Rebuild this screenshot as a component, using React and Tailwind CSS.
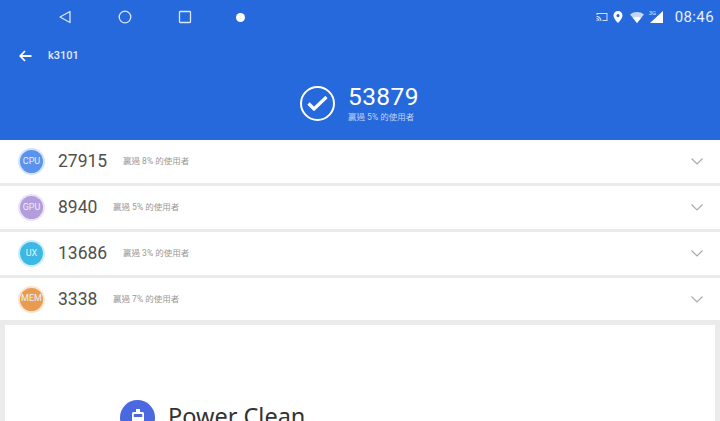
import React from "react";

const rows = [
  { label: "CPU", score: "27915", pct: "8%", bg: "bg-[#5b93ec]", ring: "border-[#d3e3fb]", scoreW: "w-[65px]", h: "h-[43px]" },
  { label: "GPU", score: "8940", pct: "5%", bg: "bg-[#b39ddb]", ring: "border-[#e9e2f6]", scoreW: "w-[55px]", h: "h-[43px]" },
  { label: "UX", score: "13686", pct: "3%", bg: "bg-[#3db8e4]", ring: "border-[#c9edf9]", scoreW: "w-[65px]", h: "h-[43px]" },
  { label: "MEM", score: "3338", pct: "7%", bg: "bg-[#e89c51]", ring: "border-[#fae3cd]", scoreW: "w-[55px]", h: "h-[42px]" },
];

function StatusBar() {
  return (
    <div className="flex h-[34px] items-center text-white">
      <div className="flex items-center pl-[58px]">
        <svg width="14" height="14" viewBox="0 0 14 14" fill="none" stroke="#dbe7fb" strokeWidth="1.3">
          <path d="M12 1.5V12.5L2 7Z" strokeLinejoin="round" />
        </svg>
        <svg className="ml-[46px]" width="14" height="14" viewBox="0 0 14 14" fill="none" stroke="#dbe7fb" strokeWidth="1.3">
          <circle cx="7" cy="7" r="5.8" />
        </svg>
        <svg className="ml-[46px]" width="14" height="14" viewBox="0 0 14 14" fill="none" stroke="#dbe7fb" strokeWidth="1.3">
          <rect x="1.5" y="1.5" width="11" height="11" rx="0.8" />
        </svg>
        <div className="ml-[44px] h-[9px] w-[9px] rounded-full bg-white" />
      </div>
      <div className="ml-auto flex items-center pr-[6px]">
        <svg width="12" height="10" viewBox="0 0 11 10" fill="#cfdff9">
          <path d="M0 1h11v8H6V8h4V2H1v1H0zM0 4c3 0 5 2 5 5H4c0-2-2-4-4-4zm0 2c2 0 3 1 3 3H2c0-1-1-2-2-2zm0 2h1v1H0z" />
        </svg>
        <svg className="ml-[5px]" width="10" height="12" viewBox="0 0 10 12" fill="#fff">
          <path fillRule="evenodd" d="M5 0a4.5 4.5 0 0 1 4.5 4.5C9.500 7.500 5 12 5 12S.5 7.500.5 4.500A4.500 4.500 0 0 1 5 0zm0 3a1.600 1.600 0 1 0 0 3.200A1.600 1.600 0 0 0 5 3z" />
        </svg>
        <svg className="ml-[7px]" width="14" height="11" viewBox="0 0 14 11">
          <path d="M0 2.500C4-.8 10-.8 14 2.500L7 11Z" fill="#c3d7f7" />
          <path d="M3 6C5 4.500 9 4.500 11 6L7 11Z" fill="#fff" />
        </svg>
        <div className="relative ml-[5px] h-[14px] w-[15px]">
          <span className="absolute left-0 top-[-1px] font-['Roboto',sans-serif] text-[6px] leading-[7px] text-[#dbe7fb]">3G</span>
          <svg className="absolute left-0 top-0" width="15" height="14" viewBox="0 0 15 14" fill="#fff">
            <path d="M14 1V13H1Z" />
          </svg>
        </div>
        <span className="ml-[11px] font-['Roboto',sans-serif] text-[15px] tracking-[0.4px] text-[#e6effd]">08:46</span>
      </div>
    </div>
  );
}

export default function App() {
  return (
    <div className="h-[421px] w-[720px] overflow-hidden bg-[#ebebeb] font-['Roboto','Noto_Sans_CJK_TC',sans-serif]">
      <div className="h-[140px] bg-[#2669dd]">
        <StatusBar />
        <div className="flex h-[44px] items-center pl-[19px]">
          <svg width="13" height="12" viewBox="0 0 13 12" fill="none" stroke="#fff" strokeWidth="1.800">
            <path d="M12.500 6H1.500M6 1 1.200 6 6 11" />
          </svg>
          <span className="ml-[16px] text-[11px] font-medium text-[#e3edfc]">k3101</span>
        </div>
        <div className="mt-[5px] flex items-center justify-center">
          <div className="flex h-[35px] w-[35px] items-center justify-center rounded-full border-2 border-white">
            <svg width="21" height="16" viewBox="0 0 21 16" fill="none" stroke="#fff" strokeWidth="3.200">
              <path d="M1.500 8.500 7 14 19.500 2" />
            </svg>
          </div>
          <div className="ml-[13px] flex w-[72px] flex-col">
            <span className="text-[24.500px] leading-[28px] tracking-[0.4px] text-white">53879</span>
            <span className="whitespace-nowrap text-[8.500px] leading-[12px] text-[#bcd3f6]">贏過 5% 的使用者</span>
          </div>
        </div>
      </div>
      {rows.map((row) => (
        <div key={row.label} className={`mb-[3px] flex items-center bg-white pl-[18px] pr-[17px] ${row.h}`}>
          <div className={`flex h-[27px] w-[27px] items-center justify-center rounded-full border-2 ${row.bg} ${row.ring}`}>
            <span className="text-[9px] text-[#e8f0fc]">{row.label}</span>
          </div>
          <span className={`ml-[13px] ${row.scoreW} text-[17.500px] text-[#4f4f4f]`}>{row.score}</span>
          <span className="text-[8.500px] text-[#999999]">贏過 {row.pct} 的使用者</span>
          <svg className="ml-auto" width="12" height="7" viewBox="0 0 12 7" fill="none" stroke="#a8a8a8" strokeWidth="1.100">
            <path d="M.5.500 6 6 11.500.500" />
          </svg>
        </div>
      ))}
      <div className="mx-[5px] mt-[5px] h-[96px] bg-white pl-[115px] pt-[75px]">
        <div className="flex items-start">
          <div className="flex h-[35px] w-[35px] justify-center rounded-full bg-[#4a68e0] pt-[9px]">
            <svg width="12" height="14" viewBox="0 0 12 14" fill="#fff">
              <path fillRule="evenodd" d="M4 0h4v3h2.500A1.500 1.500 0 0 1 12 4.500V14H0V4.500A1.500 1.500 0 0 1 1.500 3H4zM1.800 5v3h8.400V5z" />
            </svg>
          </div>
          <span className="ml-[13px] font-['Noto_Sans',sans-serif] text-[23.500px] leading-[33px] text-[#333]">Power Clean</span>
        </div>
      </div>
    </div>
  );
}
